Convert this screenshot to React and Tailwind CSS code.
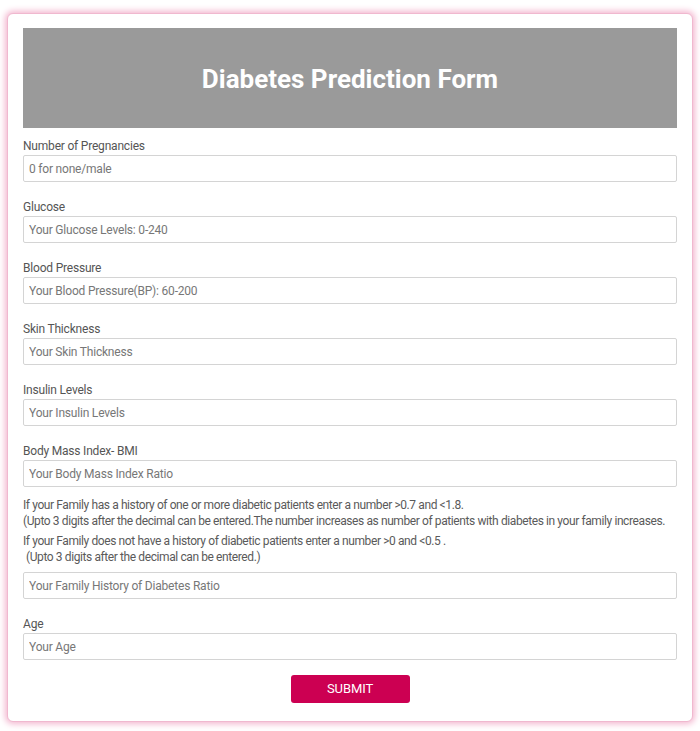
import React from "react";

const fields = [
  { label: "Number of Pregnancies", placeholder: "0 for none/male" },
  { label: "Glucose", placeholder: "Your Glucose Levels: 0-240" },
  { label: "Blood Pressure", placeholder: "Your Blood Pressure(BP): 60-200" },
  { label: "Skin Thickness", placeholder: "Your Skin Thickness" },
  { label: "Insulin Levels", placeholder: "Your Insulin Levels" },
  { label: "Body Mass Index- BMI", placeholder: "Your Body Mass Index Ratio" },
];

const Field = ({ label, placeholder }) => (
  <div className="mb-[17px]">
    <label className="block text-[12px] leading-[16px] text-[#555] tracking-[-0.2px]">{label}</label>
    <input
      type="text"
      placeholder={placeholder}
      className="mt-px block w-full h-[27px] px-[5px] border border-[#d4d4d4] rounded-[2px] text-[12px] tracking-[-0.2px] placeholder:text-[#777] outline-none"
    />
  </div>
);

const App = () => {
  return (
    <div className="bg-white min-h-[731px] pt-[13px] pl-[7px] pr-[7px] pb-[9px]" style={{ fontFamily: "Roboto, 'Liberation Sans', sans-serif" }}>
      <form className="bg-white rounded-[6px] border border-[#f0b8cf] shadow-[0_0_6px_2px_#f3b6cf] px-[15px] pt-[14px] pb-[18px]">
        <div className="bg-[#9a9a9a] h-[100px] flex items-center justify-center">
          <h1 className="text-white font-bold text-[26px] pt-[2px]">Diabetes Prediction Form</h1>
        </div>

        <div className="pt-[10px]">
          {fields.map((f) => (
            <Field key={f.label} {...f} />
          ))}

          <div className="text-[12px] leading-[16px] text-[#5a5a5a] tracking-[-0.4px] -mt-[7px]">
            <p>If your Family has a history of one or more diabetic patients enter a number &gt;0.7 and &lt;1.8.</p>
            <p>(Upto 3 digits after the decimal can be entered.The number increases as number of patients with diabetes in your family increases.</p>
            <p className="mt-[4px]">If your Family does not have a history of diabetic patients enter a number &gt;0 and &lt;0.5 .</p>
            <p className="pl-[3px]">(Upto 3 digits after the decimal can be entered.)</p>
          </div>
          <input
            type="text"
            placeholder="Your Family History of Diabetes Ratio"
            className="mt-[7px] mb-[17px] block w-full h-[27px] px-[5px] border border-[#d4d4d4] rounded-[2px] text-[12px] tracking-[-0.2px] placeholder:text-[#777] outline-none"
          />

          <Field label="Age" placeholder="Your Age" />

          <div className="flex justify-center -mt-[2px]">
            <button type="button" className="w-[119px] h-[28px] rounded-[3px] bg-[#cc0052] text-white text-[13px] uppercase tracking-[-0.1px]">
              Submit
            </button>
          </div>
        </div>
      </form>
    </div>
  );
};

export default App;
